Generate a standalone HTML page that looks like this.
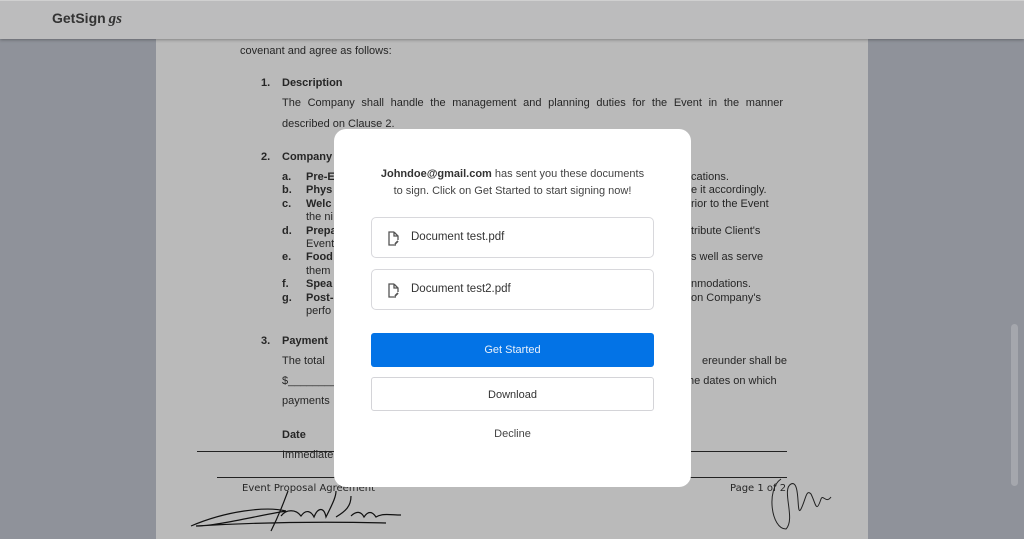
<!DOCTYPE html>
<html><head><style>
*{margin:0;padding:0;box-sizing:border-box}
body{width:1024px;height:538px;overflow:hidden;background:#8f929a;font-family:"Liberation Sans",sans-serif;position:relative}
.hdr{position:absolute;left:0;top:0;width:1024px;height:39px;background:#bcbcbd;box-shadow:0 1px 3px rgba(0,0,0,.3);z-index:3;border-top:1px solid #d0d0d0}
.logo{position:absolute;left:52px;top:9px;font-weight:bold;font-size:14px;color:#333}
.logo i{font-family:"Liberation Serif",serif;font-size:15px;margin-left:3px}
.page{position:absolute;left:156px;top:1px;width:712px;height:538px;background:#bababa}
.t{position:absolute;font-size:11px;color:#262626;white-space:nowrap}
.b{font-weight:bold}
.line{position:absolute;height:1px;background:#222}
.sb{position:absolute;left:1011px;top:324px;width:7px;height:162px;background:#a5a7ad;border-radius:4px}
.modal{position:absolute;left:334px;top:129px;width:357px;height:358px;background:#fff;border-radius:12px;z-index:5;font-family:"Liberation Sans",sans-serif;color:#333}
.msg{position:absolute;top:37px;left:0;width:357px;text-align:center;font-size:11px;line-height:17px;color:#444}
.doc{position:absolute;left:37px;width:283px;height:41px;border:1px solid #d8d8dc;border-radius:5px;font-size:11.5px;color:#333}
.doc span{position:absolute;left:39px;top:13px}
.doc svg{position:absolute;left:15px;top:13px}
.btn{position:absolute;left:37px;width:283px;height:34px;border-radius:3px;text-align:center;line-height:34px;font-size:11px}
</style></head><body>
<div class="hdr"><div class="logo">GetSign<i>gs</i></div></div>
<div class="page">
<div class="t" style="left:84px;top:44px">covenant and agree as follows:</div>
<div class="t b" style="left:105px;top:76px">1.</div><div class="t b" style="left:126px;top:76px">Description</div>
<div class="t" style="left:126px;top:96px;word-spacing:3.6px">The Company shall handle the management and planning duties for the Event in the manner</div>
<div class="t" style="left:126px;top:117px">described on Clause 2.</div>
<div class="t b" style="left:105px;top:150px">2.</div><div class="t b" style="left:126px;top:150px">Company</div>
<div class="t b" style="left:126px;top:170px">a.</div><div class="t b" style="left:150px;top:170px">Pre-E</div>
<div class="t b" style="left:126px;top:183px">b.</div><div class="t b" style="left:150px;top:183px">Phys</div>
<div class="t b" style="left:126px;top:197px">c.</div><div class="t b" style="left:150px;top:197px">Welc</div>
<div class="t" style="left:150px;top:210px">the ni</div>
<div class="t b" style="left:126px;top:224px">d.</div><div class="t b" style="left:150px;top:224px">Prepa</div>
<div class="t" style="left:150px;top:237px">Event</div>
<div class="t b" style="left:126px;top:250px">e.</div><div class="t b" style="left:150px;top:250px">Food</div>
<div class="t" style="left:150px;top:264px">them</div>
<div class="t b" style="left:126px;top:277px">f.</div><div class="t b" style="left:150px;top:277px">Spea</div>
<div class="t b" style="left:126px;top:291px">g.</div><div class="t b" style="left:150px;top:291px">Post-</div>
<div class="t" style="left:150px;top:304px">perfo</div>
<div class="t" style="left:535px;top:170px">cations.</div>
<div class="t" style="left:535px;top:183px">e it accordingly.</div>
<div class="t" style="left:535px;top:197px">rior to the Event</div>
<div class="t" style="left:535px;top:224px">tribute Client's</div>
<div class="t" style="left:535px;top:250px">s well as serve</div>
<div class="t" style="left:535px;top:277px">nmodations.</div>
<div class="t" style="left:535px;top:291px">on Company's</div>
<div class="t b" style="left:105px;top:334px">3.</div><div class="t b" style="left:126px;top:334px">Payment</div>
<div class="t" style="left:126px;top:354px">The total</div>
<div class="t" style="left:126px;top:374px">$_________</div>
<div class="t" style="left:126px;top:394px">payments</div>
<div class="t" style="left:546px;top:354px">ereunder shall be</div>
<div class="t" style="left:532px;top:374px">he dates on which</div>
<div class="t b" style="left:126px;top:428px">Date</div>
<div class="t" style="left:126px;top:448px">Immediate</div>
<div class="line" style="left:41px;top:450px;width:590px"></div>
<div class="line" style="left:61px;top:476px;width:570px"></div>
<div class="t" style="left:86px;top:482px;font-family:'DejaVu Sans',sans-serif;font-size:10px">Event Proposal Agreement</div>
<div class="t" style="left:574px;top:482px;font-family:'DejaVu Sans',sans-serif;font-size:10px">Page 1 of 2</div>
<svg style="position:absolute;left:30px;top:470px" width="230" height="68" fill="none" stroke="#111" stroke-width="1.2"><path d="M5 55 C40 40 80 35 100 40 C70 45 30 55 10 55 C60 52 120 50 200 52 M85 60 C95 40 100 25 102 20 M95 45 C100 38 110 38 115 45 C120 38 125 40 128 46 C132 36 138 36 140 46 C148 30 150 25 150 20 M150 46 C160 40 165 35 165 25 M165 45 C170 40 175 40 178 46 C182 40 186 40 190 46 C196 42 205 44 215 44"/></svg>
<svg style="position:absolute;left:605px;top:468px" width="80" height="70" fill="none" stroke="#222" stroke-width="1"><path d="M20 10 C5 20 10 60 25 60 C35 50 20 20 30 15 C40 10 35 50 40 40 C45 30 45 20 50 25 C55 35 55 45 60 30 C62 25 65 35 70 28"/></svg>
</div>
<div class="sb"></div>
<div class="modal">
<div class="msg"><b style="font-weight:bold;color:#333">Johndoe@gmail.com</b> has sent you these documents<br>to sign. Click on Get Started to start signing now!</div>
<div class="doc" style="top:88px"><svg width="12" height="15" viewBox="0 0 12 15" fill="none" stroke="#555" stroke-width="1.3"><path d="M7 1H2v13h7M7 1l4 4v4M7 1v4h4"/><path d="M8 13l3-3" stroke-width="1.8"/></svg><span>Document test.pdf</span></div>
<div class="doc" style="top:140px"><svg width="12" height="15" viewBox="0 0 12 15" fill="none" stroke="#555" stroke-width="1.3"><path d="M7 1H2v13h7M7 1l4 4v4M7 1v4h4"/><path d="M8 13l3-3" stroke-width="1.8"/></svg><span>Document test2.pdf</span></div>
<div class="btn" style="top:204px;background:#0373e6;color:#e8f0fb">Get Started</div>
<div class="btn" style="top:248px;border:1px solid #d4d4d8;color:#333">Download</div>
<div class="btn" style="top:288px;color:#444">Decline</div>
</div>
</body></html>
